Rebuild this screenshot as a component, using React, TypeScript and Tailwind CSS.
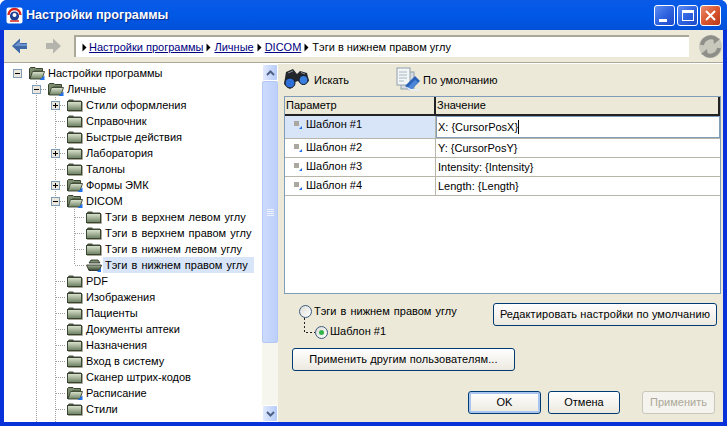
import React from "react";

type FolderKind = "closed" | "open" | "selected";

interface TreeItem {
  label: string;
  level: number;
  box?: "plus" | "minus";
  folder: FolderKind;
  guides: number[];
  last?: boolean;
  selected?: boolean;
}

const L1 = [1];
const L2 = [1, 2];

const items: TreeItem[] = [
  { label: "Настройки программы", level: 0, box: "minus", folder: "open", guides: [] },
  { label: "Личные", level: 1, box: "minus", folder: "open", guides: [] },
  { label: "Стили оформления", level: 2, box: "plus", folder: "closed", guides: L1 },
  { label: "Справочник", level: 2, folder: "closed", guides: L1 },
  { label: "Быстрые действия", level: 2, folder: "closed", guides: L1 },
  { label: "Лаборатория", level: 2, box: "plus", folder: "closed", guides: L1 },
  { label: "Талоны", level: 2, folder: "closed", guides: L1 },
  { label: "Формы ЭМК", level: 2, box: "plus", folder: "open", guides: L1 },
  { label: "DICOM", level: 2, box: "minus", folder: "open", guides: L1 },
  { label: "Тэги в верхнем левом углу", level: 3, folder: "closed", guides: L2 },
  { label: "Тэги в верхнем правом углу", level: 3, folder: "closed", guides: L2 },
  { label: "Тэги в нижнем левом углу", level: 3, folder: "closed", guides: L2 },
  { label: "Тэги в нижнем правом углу", level: 3, folder: "selected", guides: L2, last: true, selected: true },
  { label: "PDF", level: 2, folder: "closed", guides: L1 },
  { label: "Изображения", level: 2, folder: "closed", guides: L1 },
  { label: "Пациенты", level: 2, folder: "closed", guides: L1 },
  { label: "Документы аптеки", level: 2, folder: "closed", guides: L1 },
  { label: "Назначения", level: 2, folder: "closed", guides: L1 },
  { label: "Вход в систему", level: 2, folder: "closed", guides: L1 },
  { label: "Сканер штрих-кодов", level: 2, folder: "closed", guides: L1 },
  { label: "Расписание", level: 2, folder: "open", guides: L1 },
  { label: "Стили", level: 2, folder: "closed", guides: L1 },
];

const rows = [
  { name: "Шаблон #1", value: "X: {CursorPosX}" },
  { name: "Шаблон #2", value: "Y: {CursorPosY}" },
  { name: "Шаблон #3", value: "Intensity: {Intensity}" },
  { name: "Шаблон #4", value: "Length: {Length}" },
];

function Folder({ kind }: { kind: FolderKind }) {
  return (
    <svg width="16" height="14" viewBox="0 0 16 14" className="shrink-0">
      <defs>
        <linearGradient id="fold" x1="0" y1="0" x2="0" y2="1">
          <stop offset="0" stopColor="#dfe6d2" />
          <stop offset="1" stopColor="#6b8060" />
        </linearGradient>
        <linearGradient id="foldSel" x1="0" y1="0" x2="0" y2="1">
          <stop offset="0" stopColor="#a9b89a" />
          <stop offset="1" stopColor="#34402e" />
        </linearGradient>
      </defs>
      {kind === "closed" && (
        <>
          <path d="M1 3.5 V2.5 L2 1.5 H6 L7 2.5 H14 V3.5 Z" fill="#4a5540" />
          <rect x="0.5" y="3.5" width="14" height="9" fill="url(#fold)" stroke="#3a4433" strokeWidth="1" />
          <path d="M15.5 4 V13.5 H1" stroke="#a9a99a" fill="none" />
        </>
      )}
      {kind === "open" && (
        <>
          <path d="M0.5 13 V2.5 L1.5 1.5 H6 L7 2.5 H13.5 V5 H5 Z" fill="#7c8c6e" stroke="#39442f" strokeWidth="1" />
          <path d="M1 13 L3.5 5.5 H15.5 L13 13 Z" fill="url(#fold)" stroke="#39442f" strokeWidth="0.9" />
          <path d="M10.5 14 L15.5 9.5 V14 Z" fill="#1f6fe8" />
        </>
      )}
      {kind === "selected" && (
        <>
          <path d="M3 5 L5 2 H12 L14 5 Z" fill="#7c8c6e" stroke="#222a1d" strokeWidth="0.8" />
          <path d="M0.5 7 H15.5 L13.5 12.5 H3 Z" fill="url(#foldSel)" stroke="#1c2318" strokeWidth="0.8" />
          <path d="M11 14 L15 10 V14 Z" fill="#1f6fe8" />
        </>
      )}
    </svg>
  );
}

function Connector({ box, guide, last, branch }: { box?: "plus" | "minus"; guide?: boolean; last?: boolean; branch?: boolean }) {
  return (
    <svg width="19" height="16" viewBox="0 0 19 16" className="shrink-0">
      {guide && <path d="M9.5 0 V16" stroke="#a0a0a0" strokeDasharray="1 1" />}
      {branch && (
        <>
          <path d={last ? "M9.5 0 V8" : "M9.5 0 V16"} stroke="#a0a0a0" strokeDasharray="1 1" />
          <path d="M10 8.5 H20" stroke="#a0a0a0" strokeDasharray="1 1" />
        </>
      )}
      {box && (
        <>
          <rect x="5.5" y="4.5" width="8" height="8" fill="#ebe7dc" stroke="#7f9db9" />
          <path d="M7 8.5 H12" stroke="#000" />
          {box === "plus" && <path d="M9.5 6 V11" stroke="#000" />}
        </>
      )}
    </svg>
  );
}

function TreeRow({ item }: { item: TreeItem }) {
  const cells: React.ReactNode[] = [];
  for (let i = 0; i < item.level; i++) {
    const isGuide = item.guides.includes(i);
    cells.push(<Connector key={i} guide={isGuide} />);
  }
  return (
    <div className="flex h-4 items-center">
      {cells}
      <Connector
        box={item.box}
        branch={item.level > 0}
        last={item.last}
      />
      <div className="ml-[2px] flex h-4 items-center">
        <Folder kind={item.folder} />
      </div>
      <span
        className={`ml-[1px] flex h-4 items-center whitespace-nowrap pl-[2px] ${item.level === 3 ? "[word-spacing:1px]" : ""} ${
          item.selected ? "bg-[#d8e4f8] pr-[6px]" : "pr-[2px]"
        }`}
      >
        {item.label}
      </span>
    </div>
  );
}

function ScrollChevron({ up }: { up: boolean }) {
  return (
    <div className="flex h-[17px] w-4 shrink-0 items-center justify-center rounded-[2px] border border-white bg-gradient-to-r from-[#e1eafe] to-[#b6cbf8]">
      <svg width="9" height="6" viewBox="0 0 9 6">
        <path d={up ? "M1 5 L4.5 1.5 L8 5" : "M1 1 L4.5 4.5 L8 1"} stroke="#4d6185" strokeWidth="2" fill="none" />
      </svg>
    </div>
  );
}

function XpButton({ children, className, disabled, primary }: { children: React.ReactNode; className: string; disabled?: boolean; primary?: boolean }) {
  return (
    <div
      className={`flex h-[23px] items-center justify-center rounded-[3px] border ${
        disabled
          ? "border-[#c9c7ba] bg-[#f4f3ee] text-[#aca899]"
          : `border-[#003c74] bg-gradient-to-b from-white to-[#ece9e0] text-black ${primary ? "shadow-[inset_0_0_0_2px_#a9c4ee]" : ""}`
      } ${className}`}
    >
      {children}
    </div>
  );
}

function CaptionButton({ red, children }: { red?: boolean; children: React.ReactNode }) {
  return (
    <div
      className={`flex h-[21px] w-[21px] items-center justify-center rounded-[3px] border border-white ${
        red ? "bg-gradient-to-br from-[#e98a6c] via-[#d9562f] to-[#b8381a]" : "bg-gradient-to-br from-[#5f8cf2] via-[#2f63e0] to-[#1f49c8]"
      }`}
    >
      {children}
    </div>
  );
}

function RowMark() {
  return (
    <svg width="12" height="10" viewBox="0 0 12 10" className="shrink-0">
      <rect x="2" y="1" width="5" height="5" fill="#aaa8a0" />
      <path d="M7 9 L10 6 V9 Z" fill="#1f6fe8" />
    </svg>
  );
}

function Crumb({ first }: { first?: boolean }) {
  return (
    <svg width="5" height="9" viewBox="0 0 5 9" className={`shrink-0 ${first ? "mr-[2px]" : "mx-[3px]"}`}>
      <path d="M0.5 0.5 L4.5 4.5 L0.5 8.5 Z" fill="#000" />
    </svg>
  );
}

export default function App() {
  return (
    <div className="flex h-[426px] w-[727px] flex-col overflow-hidden rounded-t-[7px] bg-[#0831d9] font-['Liberation_Sans',Arial,sans-serif] text-[11px] text-black">
      {/* Title bar */}
      <div className="flex h-[30px] shrink-0 items-center bg-gradient-to-b from-[#0a5ae6] via-[#0058e6] to-[#0350d8] pl-[6px] pr-[6px]">
        <svg width="17" height="17" viewBox="0 0 17 17" className="shrink-0">
          <rect x="0.5" y="0.5" width="16" height="16" rx="2" fill="#fff" />
          <path d="M2.5 8 A6 6 0 0 1 14.5 8" stroke="#d8261c" strokeWidth="2.4" fill="none" />
          <circle cx="8.5" cy="9" r="4.6" fill="#1d3f94" />
          <circle cx="8.5" cy="8" r="2" fill="#fff" />
          <path d="M4 14 H13" stroke="#d8261c" strokeWidth="1.6" />
        </svg>
        <span className="ml-[3px] text-[12.6px] font-bold text-white [text-shadow:1px_1px_1px_#0a2a8c]">
          Настройки программы
        </span>
        <div className="ml-auto flex gap-[2px]">
          <CaptionButton>
            <div className="mt-[10px] mr-[4px] h-[3px] w-[8px] bg-white" />
          </CaptionButton>
          <CaptionButton>
            <div className="h-[11px] w-[12px] border border-t-[3px] border-white" />
          </CaptionButton>
          <CaptionButton red>
            <svg width="11" height="11" viewBox="0 0 11 11">
              <path d="M1 1 L10 10 M10 1 L1 10" stroke="#fff" strokeWidth="2" />
            </svg>
          </CaptionButton>
        </div>
      </div>

      {/* Client area */}
      <div className="mx-[4px] mb-[4px] flex min-h-0 flex-1 flex-col bg-[#ece9d8]">
        {/* Navigation */}
        <div className="flex h-[33px] shrink-0 items-center border-b border-[#aca899] pl-[8px]">
          <svg width="16" height="16" viewBox="0 0 16 16" className="shrink-0">
            <path d="M0 8 L8 0.5 V5 H15 V11 H8 V15.5 Z" fill="#3f68a8" />
            <path d="M2 8 L8 3 V6 H15 V8 Z" fill="#6d92cb" />
          </svg>
          <svg width="16" height="16" viewBox="0 0 16 16" className="ml-[17px] shrink-0">
            <path d="M16 8 L8 0.5 V5 H1 V11 H8 V15.5 Z" fill="#b4b4ac" />
          </svg>
          <div className="ml-[13px] flex h-[22px] w-[615px] items-center border-t-[2px] border-l-[2px] border-[#aca899] bg-white pl-[6px] pt-[1px]">
            <Crumb first />
            <span className="text-[#000080] underline">Настройки программы</span>
            <Crumb />
            <span className="text-[#000080] underline">Личные</span>
            <Crumb />
            <span className="text-[#000080] underline">DICOM</span>
            <Crumb />
            <span>Тэги в нижнем правом углу</span>
          </div>
          <svg width="25" height="25" viewBox="0 0 25 25" className="ml-[9px] shrink-0">
            <circle cx="12.5" cy="12.5" r="11.5" fill="#c9c8bd" />
            <path d="M4 11 A9 9 0 0 1 18 5" stroke="#8f8f8a" strokeWidth="4" fill="none" />
            <path d="M21 14 A9 9 0 0 1 7 20" stroke="#8f8f8a" strokeWidth="4" fill="none" />
            <path d="M15 2 L22 5 L16 10 Z M10 23 L3 20 L9 15 Z" fill="#8f8f8a" />
          </svg>
        </div>

        <div className="flex min-h-0 flex-1 border-t border-white">
          {/* Tree */}
          <div className="flex w-[274px] shrink-0 bg-white">
            <div className="min-w-0 flex-1 overflow-hidden pl-[4px] pt-[1px]">
              {items.map((item) => (
                <TreeRow key={item.label} item={item} />
              ))}
              <div className="flex h-4">
                <Connector />
                <Connector guide />
                <Connector guide />
              </div>
            </div>
            <div className="flex w-4 shrink-0 flex-col bg-[#f6f5ee]">
              <ScrollChevron up />
              <div className="flex h-[262px] items-center justify-center rounded-[2px] border border-[#b3c8f6] bg-gradient-to-r from-[#cddbfc] to-[#bdd0fb]">
                <div className="flex w-[7px] flex-col gap-[1px]">
                  <div className="h-px bg-[#eef3fe]" />
                  <div className="h-px bg-[#eef3fe]" />
                  <div className="h-px bg-[#eef3fe]" />
                  <div className="h-px bg-[#eef3fe]" />
                </div>
              </div>
              <div className="flex-1" />
              <ScrollChevron up={false} />
            </div>
          </div>

          {/* Right pane */}
          <div className="flex min-w-0 flex-1 flex-col pl-[6px] pr-[2px]">
            <div className="flex h-[32px] shrink-0 items-center">
              <svg width="25" height="20" viewBox="0 0 25 20" className="mt-[-2px] shrink-0">
                <path d="M2 3 L9 0 L13 5 L16 2 L23 4 L25 12 L19 16 L14 12 L11 13 L6 20 L0 15 Z" fill="#23262b" />
                <ellipse cx="6" cy="14" rx="5" ry="5" fill="#2d6fd6" stroke="#16181c" />
                <ellipse cx="19.5" cy="11" rx="4.5" ry="4.5" fill="#3a7fe0" stroke="#16181c" />
                <path d="M4 4 L9 2 M17 3.5 L21 5" stroke="#8b9097" />
              </svg>
              <span className="ml-[5px]">Искать</span>
              <svg width="25" height="26" viewBox="0 0 25 26" className="ml-[47px] shrink-0">
                <rect x="5" y="5" width="13" height="17" fill="#d6dde2" stroke="#8fa0ab" />
                <rect x="1" y="1" width="13" height="17" fill="#f3f6f7" stroke="#8fa0ab" />
                <path d="M3 5 H11 M3 8 H11 M3 11 H11 M3 14 H8" stroke="#a7b6c0" />
                <path d="M9 19 L19 9 L24 14 L14 24 Z" fill="#2a62b8" />
                <path d="M11 21 L19 13 L22 15 L15 23 Z" fill="#4d86d8" />
                <path d="M9 19 L14 24 H24 V22 H15 Z" fill="#e8eef4" />
              </svg>
              <span className="ml-[2px]">По умолчанию</span>
            </div>

            {/* Table */}
            <div className="flex h-[198px] shrink-0 flex-col border border-[#7f9db9] bg-white">
              <div className="flex h-[19px] shrink-0 border-b-2 border-r-2 border-[#222] bg-[#ece9d8]">
                <div className="flex w-[151px] shrink-0 items-center border-r-2 border-[#222] pl-[1px]">Параметр</div>
                <div className="flex items-center pl-[1px]">Значение</div>
              </div>
              {rows.map((row, i) => (
                <div key={row.name} className={`flex shrink-0 border-b border-[#b8b6a8] ${i === 0 ? "h-[23px]" : "h-[19px]"}`}>
                  <div className={`flex w-[151px] shrink-0 items-start border-r border-[#b8b6a8] pl-[7px] ${i === 0 ? "bg-[#d8e4f8]" : ""}`}>
                    <div className="mt-[4px]">
                      <RowMark />
                    </div>
                    <span className="ml-[2px]">{row.name}</span>
                  </div>
                  {i === 0 ? (
                    <div className="flex flex-1 items-center border border-[#7f9db9] pl-[1px]">
                      {row.value}
                      <div className="h-[14px] w-px bg-black" />
                    </div>
                  ) : (
                    <div className="flex flex-1 items-center pl-[2px] pt-[1px]">{row.value}</div>
                  )}
                </div>
              ))}
            </div>

            {/* Options */}
            <div className="mt-[9px] flex shrink-0 justify-between pr-[4px]">
              <div className="pl-[15px] pt-[2px]">
                <div className="flex h-[13px] items-center">
                  <div className="h-[13px] w-[13px] rounded-full border border-[#3c5a80] bg-gradient-to-br from-[#dcdcd6] to-white" />
                  <span className="ml-[2px] [word-spacing:1px]">Тэги в нижнем правом углу</span>
                </div>
                <div className="flex h-[21px] items-end">
                  <svg width="11" height="21" viewBox="0 0 11 21" className="ml-[5px] shrink-0">
                    <path d="M0.5 0 V14.5 H11" stroke="#222" strokeDasharray="2 2" fill="none" />
                  </svg>
                  <div className="flex h-[13px] w-[13px] shrink-0 items-center justify-center rounded-full border border-[#3c5a80] bg-gradient-to-br from-[#dcdcd6] to-white">
                    <div className="h-[5px] w-[5px] rounded-full bg-[#33b54a]" />
                  </div>
                  <span className="ml-[2px]">Шаблон #1</span>
                </div>
              </div>
              <XpButton className="w-[224px] tracking-[0.1px]">Редактировать настройки по умолчанию</XpButton>
            </div>
            <div className="mt-[9px] flex shrink-0 pl-[8px]">
              <XpButton className="w-[223px] tracking-[0.1px]">Применить другим пользователям...</XpButton>
            </div>
            <div className="mt-[20px] flex shrink-0 pl-[184px]">
              <XpButton primary className="w-[73px]">OK</XpButton>
              <XpButton className="ml-[7px] w-[72px]">Отмена</XpButton>
              <XpButton disabled className="ml-[22px] w-[73px]">Применить</XpButton>
            </div>
          </div>
        </div>
      </div>
    </div>
  );
}
